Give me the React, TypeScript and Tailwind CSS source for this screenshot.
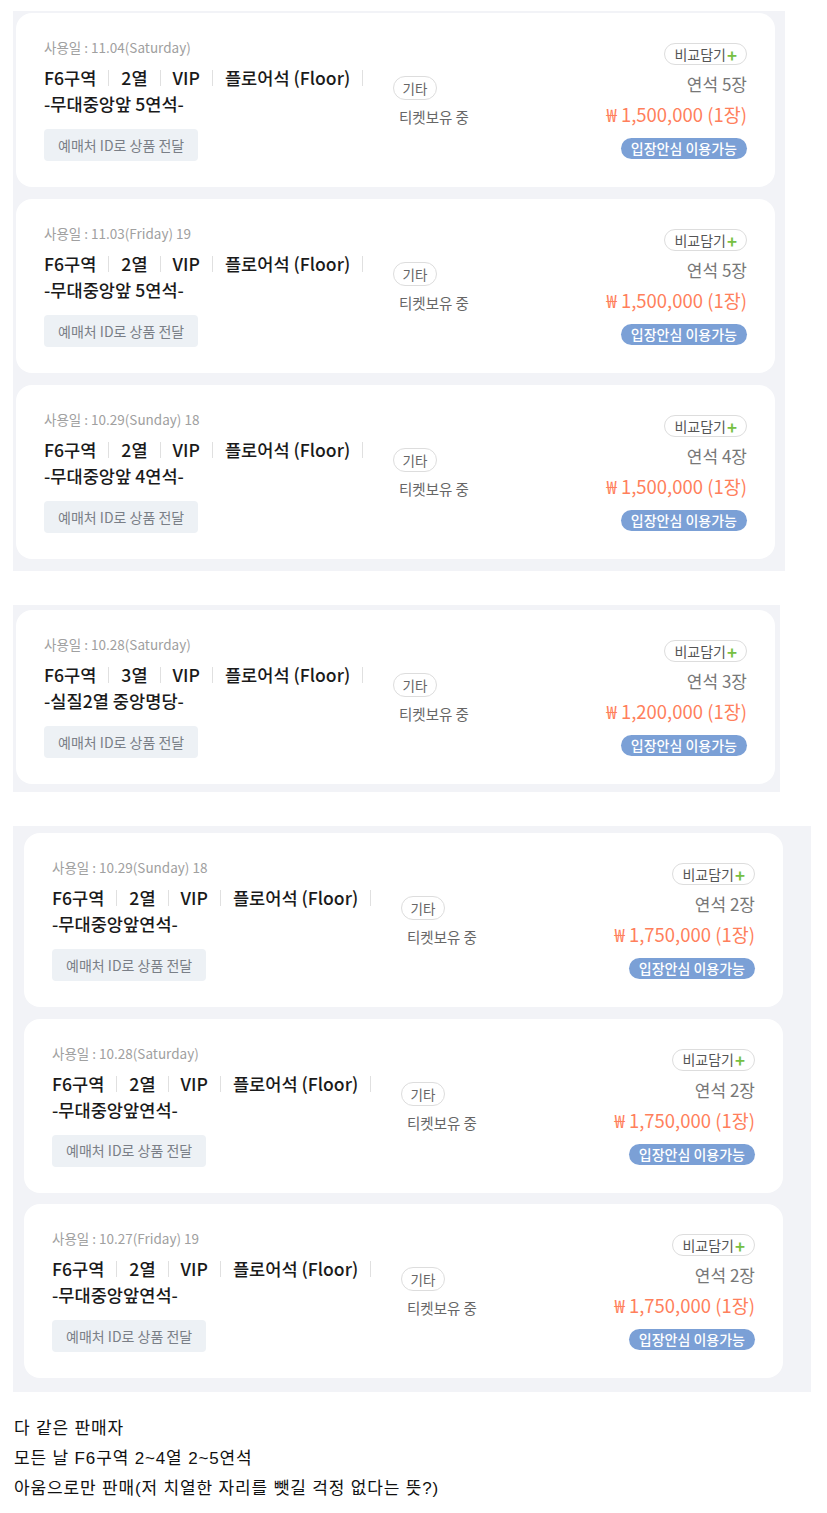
import React from "react";

type Ticket = {
  date: string;
  row: string;
  note: string;
  count: string;
  price: string;
};

const font = { fontFamily: '"Noto Sans CJK KR", "Noto Sans", sans-serif' };

const TicketCard = ({ date, row, note, count, price }: Ticket) => {
  return (
    <div className="w-[759px] h-[174px] bg-white rounded-[16px] px-7 grid grid-cols-[349px_1fr_auto]">
      <div className="pt-[25px]">
        <p className="text-[13.5px] leading-[18px] text-[#a0a0a0]">{date}</p>
        <div className="mt-[9px] text-[17.6px] leading-[26px] font-medium text-[#1a1a1a]">
          <div className="flex items-center">
            <span>F6구역</span>
            <span className="mx-3 h-[16px] w-px bg-[#e0e0e0]" />
            <span>{row}</span>
            <span className="mx-3 h-[16px] w-px bg-[#e0e0e0]" />
            <span>VIP</span>
            <span className="mx-3 h-[16px] w-px bg-[#e0e0e0]" />
            <span>플로어석 (Floor)</span>
            <span className="ml-3 h-[16px] w-px bg-[#e0e0e0]" />
          </div>
          <div>{note}</div>
        </div>
        <div className="mt-3 inline-flex items-center h-8 px-[14px] rounded-[4px] bg-[#edf1f5] text-[14px] text-[#7a7f87]">
          예매처 ID로 상품 전달
        </div>
      </div>

      <div className="pt-[62px]">
        <span className="inline-flex items-center justify-center h-6 w-[44px] rounded-full border border-[#dddddd] text-[13.5px] text-[#666]">
          기타
        </span>
        <p className="mt-[7px] ml-[6px] text-[14.5px] leading-5 text-[#666]">티켓보유 중</p>
      </div>

      <div className="pt-[30px] flex flex-col items-end">
        <span className="inline-flex items-center h-[22px] px-[9px] rounded-full border border-[#dddddd] text-[14px] text-[#555]">
          비교담기
          <span className="text-[#77c043] font-bold text-[17px] leading-none ml-[1px]">+</span>
        </span>
        <p className="mt-2 text-[17px] leading-[22px] text-[#777]">{count}</p>
        <p className="mt-[7px] text-[18.5px] leading-6 text-[#ff7f5c]">{price}</p>
        <span className="mt-3 inline-flex items-center h-[21px] px-[10px] rounded-full bg-[#7ba0d6] text-[14px] font-medium text-white">
          입장안심 이용가능
        </span>
      </div>
    </div>
  );
};

const group1: Ticket[] = [
  { date: "사용일 : 11.04(Saturday)", row: "2열", note: "-무대중앙앞 5연석-", count: "연석 5장", price: "₩ 1,500,000 (1장)" },
  { date: "사용일 : 11.03(Friday) 19", row: "2열", note: "-무대중앙앞 5연석-", count: "연석 5장", price: "₩ 1,500,000 (1장)" },
  { date: "사용일 : 10.29(Sunday) 18", row: "2열", note: "-무대중앙앞 4연석-", count: "연석 4장", price: "₩ 1,500,000 (1장)" },
];

const group2: Ticket[] = [
  { date: "사용일 : 10.28(Saturday)", row: "3열", note: "-실질2열 중앙명당-", count: "연석 3장", price: "₩ 1,200,000 (1장)" },
];

const group3: Ticket[] = [
  { date: "사용일 : 10.29(Sunday) 18", row: "2열", note: "-무대중앙앞연석-", count: "연석 2장", price: "₩ 1,750,000 (1장)" },
  { date: "사용일 : 10.28(Saturday)", row: "2열", note: "-무대중앙앞연석-", count: "연석 2장", price: "₩ 1,750,000 (1장)" },
  { date: "사용일 : 10.27(Friday) 19", row: "2열", note: "-무대중앙앞연석-", count: "연석 2장", price: "₩ 1,750,000 (1장)" },
];

export default function App() {
  return (
    <div className="w-[827px] min-h-[1513px] bg-white pt-[11px]" style={font}>
      <div className="ml-[13px] w-[772px] bg-[#f2f3f7] pt-[2px] pb-3 pl-[3px] flex flex-col gap-3">
        {group1.map((t, i) => (
          <TicketCard key={i} {...t} />
        ))}
      </div>

      <div className="mt-[34px] ml-[13px] w-[767px] bg-[#f2f3f7] pt-[5px] pb-2 pl-[3px]">
        {group2.map((t, i) => (
          <TicketCard key={i} {...t} />
        ))}
      </div>

      <div className="mt-[34px] ml-[13px] w-[798px] bg-[#f2f3f7] pt-[7px] pb-[14px] pl-[11px] flex flex-col gap-[11.5px]">
        {group3.map((t, i) => (
          <TicketCard key={i} {...t} />
        ))}
      </div>

      <div
        className="mt-[22px] ml-[14px] text-[17px] leading-[30px] tracking-[0.85px] text-[#111]"
        style={{ fontFamily: '"Liberation Sans", "Noto Sans CJK KR", sans-serif' }}
      >
        <p>다 같은 판매자</p>
        <p>모든 날 F6구역 2~4열 2~5연석</p>
        <p>아움으로만 판매(저 치열한 자리를 뺏길 걱정 없다는 뜻?)</p>
      </div>
    </div>
  );
}
